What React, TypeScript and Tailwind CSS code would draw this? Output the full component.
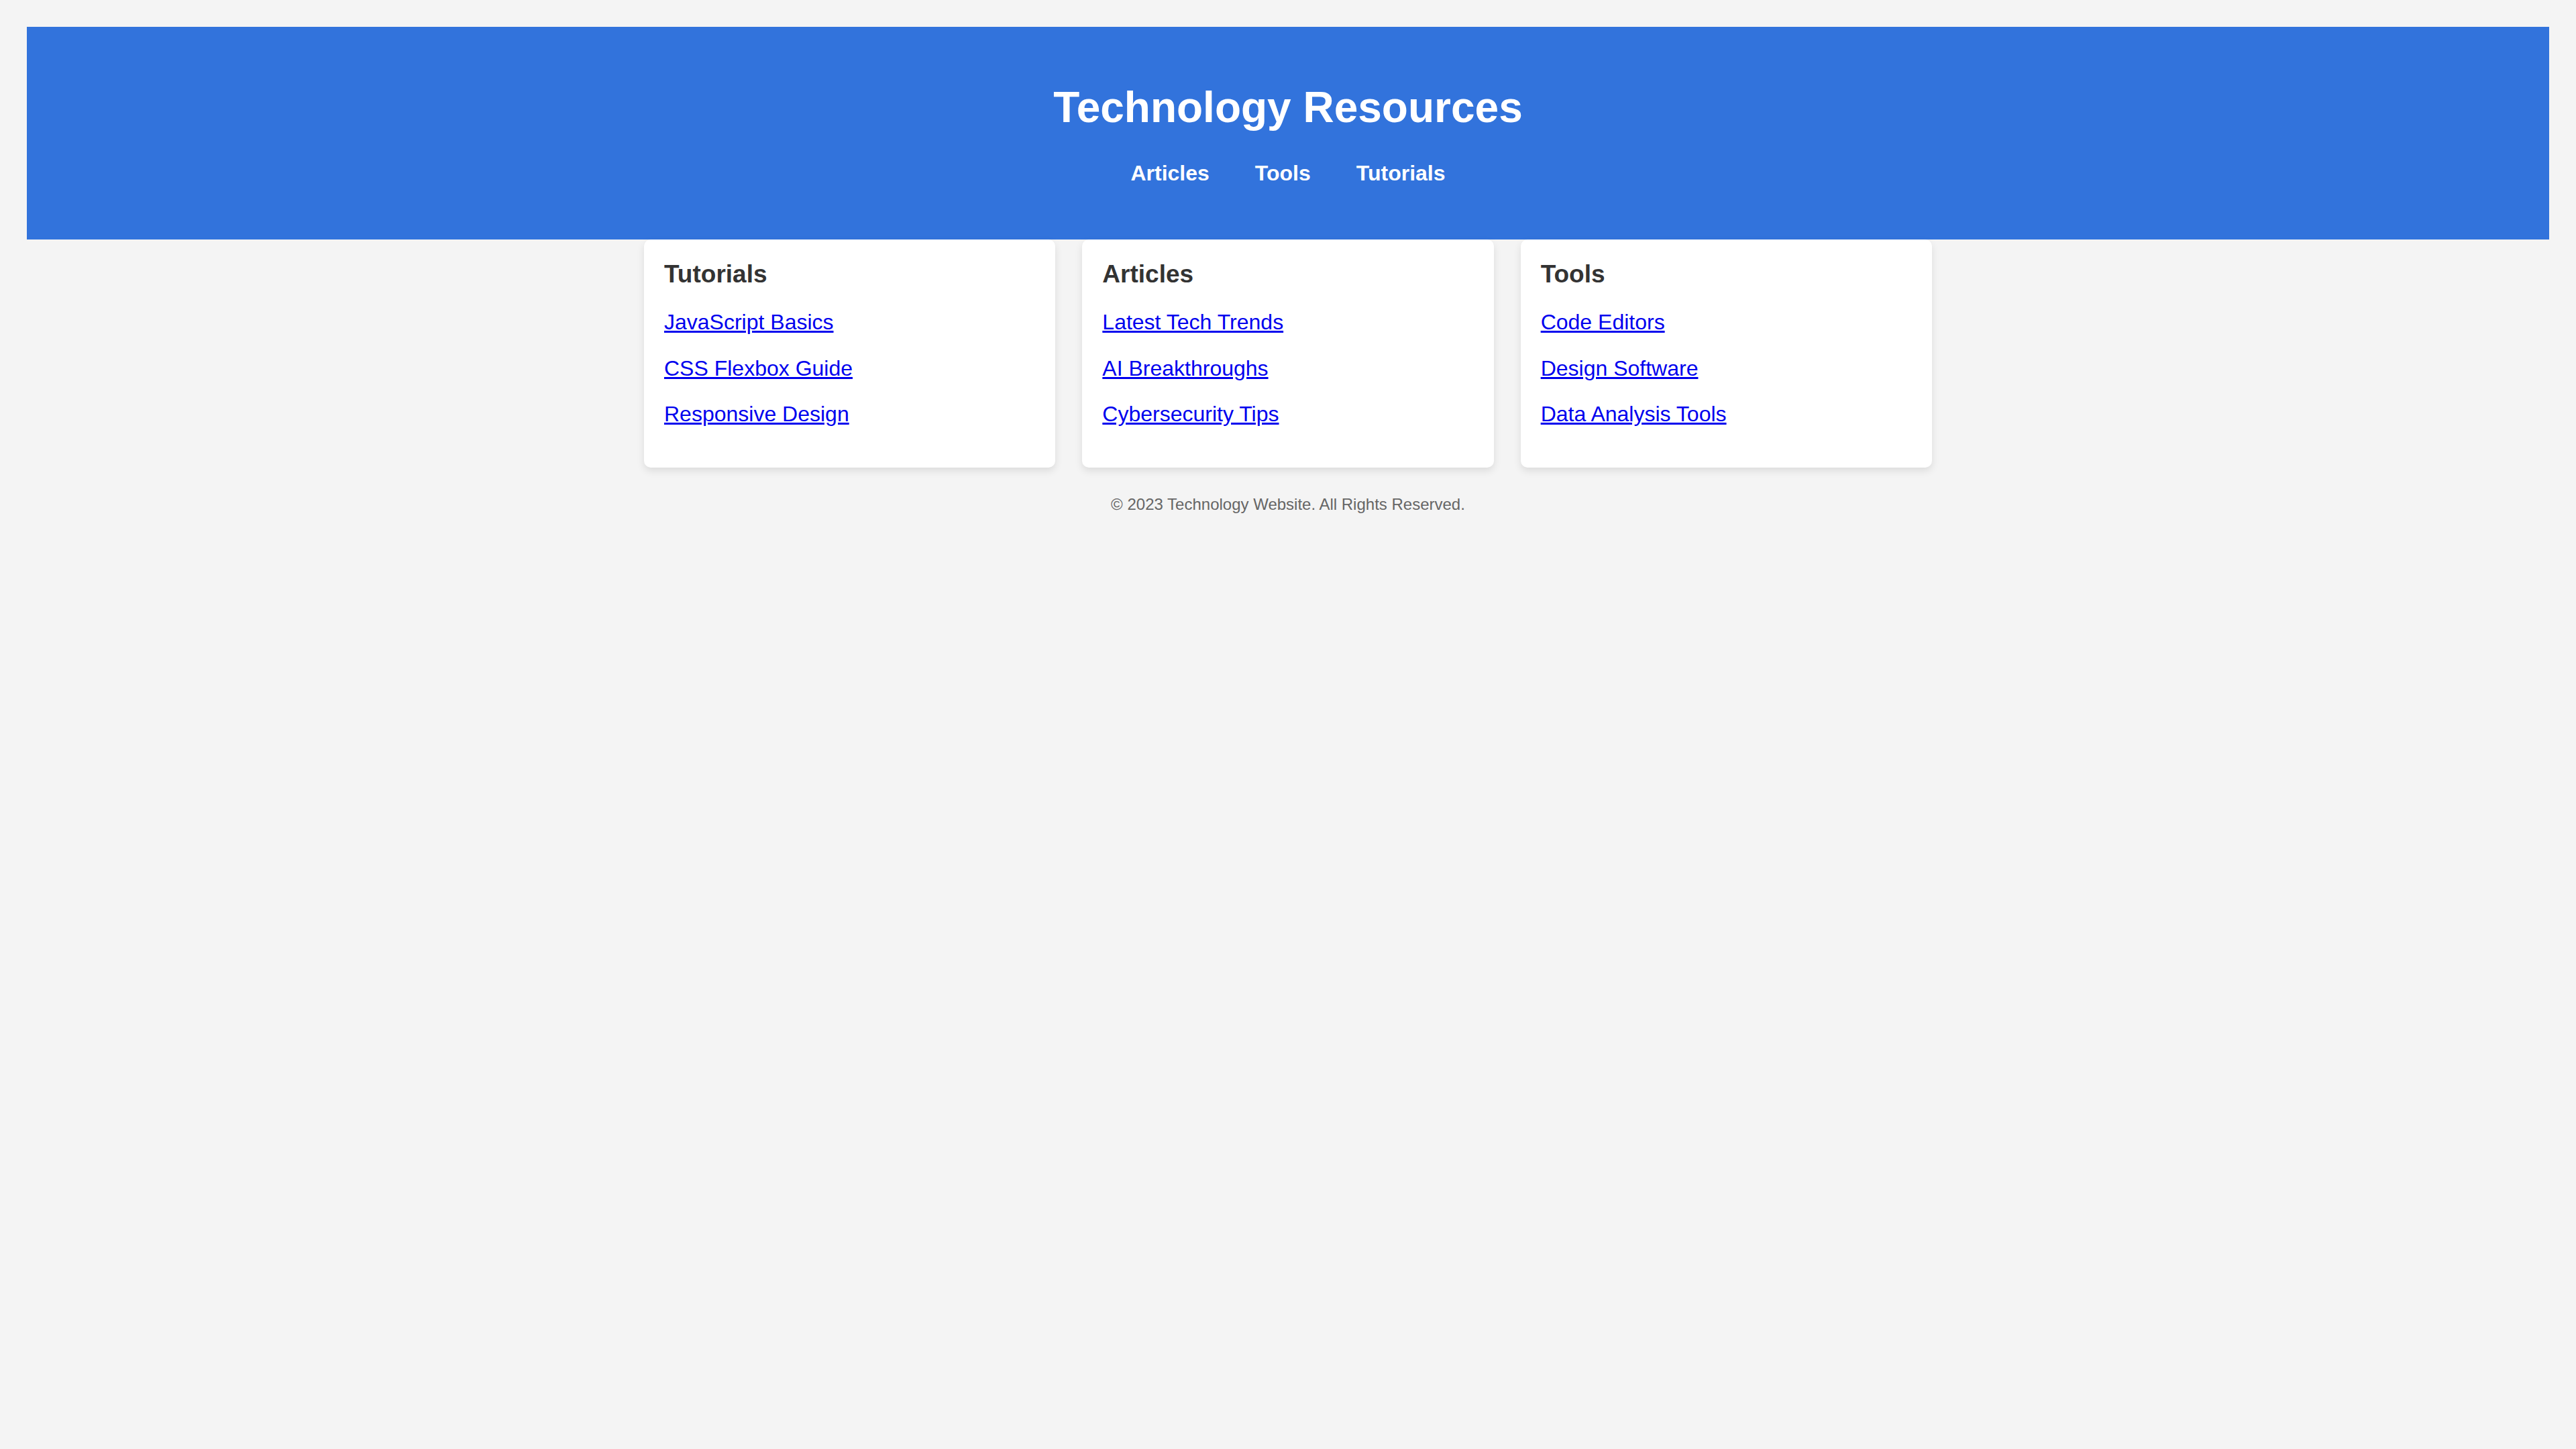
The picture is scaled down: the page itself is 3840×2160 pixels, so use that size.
const sections = [
  {
    title: "Tutorials",
    links: ["JavaScript Basics", "CSS Flexbox Guide", "Responsive Design"],
  },
  {
    title: "Articles",
    links: ["Latest Tech Trends", "AI Breakthroughs", "Cybersecurity Tips"],
  },
  {
    title: "Tools",
    links: ["Code Editors", "Design Software", "Data Analysis Tools"],
  },
];

export default function App() {
  return (
    <div className="min-h-screen bg-[#f4f4f4] px-[40px] pt-[40px] font-['Liberation_Sans',Arial,sans-serif]">
      {/* Header */}
      <header className="bg-[#3273dc] pt-[83px] pb-[80px] text-center text-white">
        <h1 className="text-[64px] font-bold leading-[74px]">Technology Resources</h1>
        <nav className="mt-[43px] flex justify-center gap-[68px]">
          {["Articles", "Tools", "Tutorials"].map((item) => (
            <a key={item} href="#" className="text-[32px] font-bold leading-[37px] text-white">
              {item}
            </a>
          ))}
        </nav>
      </header>

      {/* Cards */}
      <main className="mx-auto grid w-[1920px] grid-cols-3 gap-[40px]">
        {sections.map((section) => (
          <section
            key={section.title}
            className="rounded-[10px] bg-white px-[30px] pt-[30px] pb-[61px] shadow-[0_5px_12px_rgba(0,0,0,0.1)]"
          >
            <h3 className="text-[37px] font-bold leading-[44px] text-[#333]">{section.title}</h3>
            <ul className="mt-[31px] flex flex-col gap-[31.5px]">
              {section.links.map((link) => (
                <li key={link}>
                  <a href="#" className="text-[32px] leading-[37px] text-[#0000ee] underline">
                    {link}
                  </a>
                </li>
              ))}
            </ul>
          </section>
        ))}
      </main>

      <footer className="mt-[41px] text-center text-[24px] leading-[28px] text-[#666]">
        © 2023 Technology Website. All Rights Reserved.
      </footer>
    </div>
  );
}
